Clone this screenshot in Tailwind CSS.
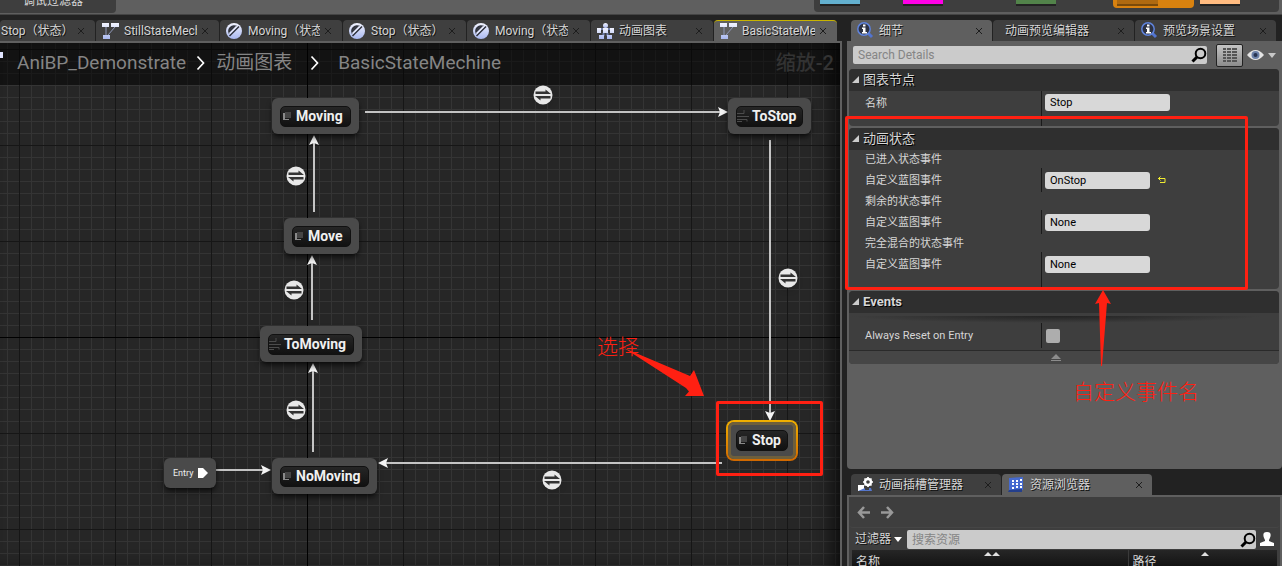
<!DOCTYPE html>
<html lang="zh-CN">
<head>
<meta charset="utf-8">
<title>AniBP_Demonstrate</title>
<script src="https://cdn.jsdelivr.net/npm/@tailwindcss/browser@4"></script>
</head>
<body class="relative flex h-screen flex-col overflow-hidden bg-[#222222] font-['Roboto','Noto_Sans_CJK_SC',sans-serif] text-xs text-[#d6d6d6]">

<svg class="absolute h-0 w-0" aria-hidden="true">
  <defs>
    <linearGradient id="lav" x1="0" y1="0" x2="0" y2="1"><stop offset="0" stop-color="#f2f4ff"/><stop offset="1" stop-color="#a9b8f0"/></linearGradient>
    <symbol id="i-machine" viewBox="0 0 17 16">
      <path d="M4 4v8M13 4 6 12" stroke="#8f98b8" fill="none"/>
      <path d="M0 0h7v4H0zM9 0h8v4H9zM1 12h7v4H1z" fill="url(#lav)"/>
    </symbol>
    <symbol id="i-state" viewBox="0 0 16 16">
      <circle cx="8" cy="8" r="8" fill="url(#lav)"/>
      <path d="M3.200 9.500A5 5 0 0 1 9.500 3.200zM3.500 13 13 3.500" fill="#3a3d4a" stroke="#30333d" stroke-width="1.500"/>
      <path d="M3.500 10.500 10.500 3.500" stroke="#e8ebff" stroke-width="1.500"/>
    </symbol>
    <symbol id="i-anim" viewBox="0 0 17 16">
      <path d="M4 6h9M6.500 10v3M10.500 10v3" stroke="#6f7da8" stroke-width="2"/>
      <circle cx="8.500" cy="2.500" r="2.500" fill="url(#lav)"/>
      <path d="M6 5h5v5H6zM0 5h4v5H0zM13 5h4v5h-4zM2 12h5v4H2zM10 12h5v4h-5z" fill="url(#lav)"/>
    </symbol>
    <symbol id="i-info" viewBox="0 0 17 17">
      <path d="m11 11 4 4" stroke="#5274d0" stroke-width="3"/>
      <circle cx="7" cy="7" r="6.200" fill="#2d3242" stroke="#5f83dc" stroke-width="1.500"/>
      <path d="M6 2.500h2.500v2H6zM5 5.500h3.500v4.500H10v1.500H5V10h1V7H5z" fill="#fff"/>
    </symbol>
    <symbol id="i-slot" viewBox="0 0 17 16">
      <path d="M1 8h6v6H1z" fill="#fff"/><path d="M1 14h14l-1-3h-2v2H8v-2z" fill="#5576cc"/>
      <circle cx="11" cy="5" r="3" fill="none" stroke="#fff" stroke-width="2.400"/>
      <path d="M11 0v2M11 8v2M6 5h2M14 5h2M7.500 1.500 9 3M13 7l1.500 1.500M14.500 1.500 13 3M7.500 8.500 9 7" stroke="#fff" stroke-width="1.700"/>
    </symbol>
    <symbol id="i-assets" viewBox="0 0 16 15">
      <path d="m1 1 14-1v13L1 15z" fill="#456ad0"/><path d="m1 13 13-1v3H0z" fill="#243f8c"/>
      <path d="M4 3h2v2H4zM8 3h2v2H8zM12 2h2v2h-2zM4 6h2v2H4zM8 6h2v2H8zM12 6h2v2h-2zM4 10h2v2H4zM8 9h2v2H8zM12 9h2v2h-2z" fill="#fff"/>
    </symbol>
    <symbol id="i-search" viewBox="0 0 16 16">
      <circle cx="9.500" cy="6.500" r="4.800" fill="none" stroke="#000" stroke-width="2"/><path d="m6 10-4.500 4.500" stroke="#000" stroke-width="3"/>
    </symbol>
    <symbol id="i-x" viewBox="0 0 8 8"><path d="m1 1 6 6M7 1 1 7" stroke="#1d1d1d" fill="none"/></symbol>
    <symbol id="i-swap" viewBox="0 0 20 20">
      <circle cx="10" cy="10" r="9.500" fill="#e8e8e8"/>
      <path d="M2.500 9V6.500h10V4.500L18 9zM17.500 11v2.500h-10v2L2 11z" fill="#333"/>
    </symbol>
    <symbol id="i-pose" viewBox="0 0 10 10"><path d="M1 2h2v6h4v1H1z" fill="#8a8a8a"/><path d="M3 1h6v6H3z" fill="#454545"/></symbol>
    <symbol id="i-conduit" viewBox="0 0 12 12"><path d="M0 3.500h7V0M0 6.500h12M0 9.500h10v2M0 11.500h5" stroke="#4c4c4c" fill="none"/></symbol>
  </defs>
</svg>

<header class="flex h-[15px] shrink-0 items-end justify-between border-b border-[#444] bg-[#5f5f5f]">
  <button class="mb-px flex h-[13px] w-[116px] items-end rounded-br bg-[#3e3e3e] pb-1.5 pl-[23px] text-xs leading-3">调试过滤器</button>
  <div class="mr-[3px] mb-[2px] flex h-3 w-[465px] items-start rounded-b bg-[#3e3e3e] pl-1.5">
    <div class="h-1.5 w-10 border-b-2 border-[#222] bg-[#63b0cf]"></div>
    <div class="ml-[43px] h-1.5 w-10 border-b-2 border-[#222] bg-[#ff00e6]"></div>
    <div class="ml-[73px] h-1.5 w-10 border-b-2 border-[#222] bg-[#52834a]"></div>
    <div class="ml-[57px] h-2 w-[81px] rounded-b-sm bg-[#d9820f] pl-1"><div class="h-1.5 w-[41px] border-b-2 border-[#7a4a0a] bg-[#b06a10]"></div></div>
    <div class="ml-1.5 h-1.5 w-10 border-b-2 border-[#222] bg-[#ffbb80]"></div>
  </div>
</header>

<div class="flex min-h-0 flex-1 pt-[5px]">

  <main class="flex min-w-0 flex-1 flex-col">
    <nav class="flex h-[21px] shrink-0 gap-px overflow-hidden [text-shadow:1px_1px_#111]">
      <div class="flex w-[95px] shrink-0 items-center rounded-t-sm bg-[#3f3f3f] pr-2.5 pl-px"><a href="#" class="flex-1 overflow-hidden whitespace-nowrap">Stop（状态）</a><button aria-label="关闭"><svg class="size-2"><use href="#i-x"/></svg></button></div>
      <div class="flex w-[123px] shrink-0 items-center rounded-t-sm bg-[#3f3f3f] pr-2.5 pl-1.5"><svg class="mr-[5px] h-4 w-[17px] shrink-0"><use href="#i-machine"/></svg><a href="#" class="mr-1 flex-1 overflow-hidden whitespace-nowrap">StillStateMechine</a><button aria-label="关闭"><svg class="size-2"><use href="#i-x"/></svg></button></div>
      <div class="flex w-[122px] shrink-0 items-center rounded-t-sm bg-[#3f3f3f] pr-2.5 pl-1.5"><svg class="mr-1.5 size-4 shrink-0"><use href="#i-state"/></svg><a href="#" class="mr-1 flex-1 overflow-hidden whitespace-nowrap">Moving（状态）</a><button aria-label="关闭"><svg class="size-2"><use href="#i-x"/></svg></button></div>
      <div class="flex w-[123px] shrink-0 items-center rounded-t-sm bg-[#3f3f3f] pr-2.5 pl-1.5"><svg class="mr-1.5 size-4 shrink-0"><use href="#i-state"/></svg><a href="#" class="mr-1 flex-1 overflow-hidden whitespace-nowrap">Stop（状态）</a><button aria-label="关闭"><svg class="size-2"><use href="#i-x"/></svg></button></div>
      <div class="flex w-[123px] shrink-0 items-center rounded-t-sm bg-[#3f3f3f] pr-2.5 pl-1.5"><svg class="mr-1.5 size-4 shrink-0"><use href="#i-state"/></svg><a href="#" class="mr-1 flex-1 overflow-hidden whitespace-nowrap">Moving（状态）</a><button aria-label="关闭"><svg class="size-2"><use href="#i-x"/></svg></button></div>
      <div class="flex w-[122px] shrink-0 items-center rounded-t-sm bg-[#3f3f3f] pr-2.5 pl-1.5"><svg class="mr-[5px] h-4 w-[17px] shrink-0"><use href="#i-anim"/></svg><a href="#" class="mr-1 flex-1 overflow-hidden whitespace-nowrap">动画图表</a><button aria-label="关闭"><svg class="size-2"><use href="#i-x"/></svg></button></div>
      <div class="flex w-[123px] shrink-0 items-center rounded-t-sm border-t border-[#c8b400] bg-[#5f5f5f] pr-2.5 pl-1.5"><svg class="mr-[5px] h-4 w-[17px] shrink-0"><use href="#i-machine"/></svg><a href="#" class="mr-1 flex-1 overflow-hidden whitespace-nowrap">BasicStateMechine</a><button aria-label="关闭"><svg class="size-2"><use href="#i-x"/></svg></button></div>
    </nav>

    <section class="relative min-h-0 flex-1 overflow-hidden border-t-2 border-r-2 border-[#5f5f5f] bg-[#262626]">
      <!-- canvas grid: 12px cells, a darker rule every 96px, axes in black -->
      <svg class="absolute inset-0 h-full w-full" shape-rendering="crispEdges">
        <defs>
          <pattern id="minor" x="7" y="6" width="12" height="12" patternUnits="userSpaceOnUse"><path d="M0 0h12v1H1v11H0z" fill="#343434"/></pattern>
          <pattern id="major" x="19" y="6" width="96" height="96" patternUnits="userSpaceOnUse"><path d="M0 0h96v1H1v95H0z" fill="#161616"/></pattern>
        </defs>
        <rect width="100%" height="100%" fill="url(#minor)"/>
        <rect width="100%" height="100%" fill="url(#major)"/>
        <path d="M307 0h1v2000h-1zM0 294h3000v1H0z" fill="#000"/>
      </svg>
      <div class="absolute inset-0 shadow-[inset_-14px_0_24px_-12px_#000]"></div>

      <!-- transitions -->
      <svg class="absolute inset-0 h-full w-full">
        <g stroke="#c4c4c4" stroke-width="2" fill="none">
          <path d="M365 69H720M770 97V370M314 169V100M312 277V220M313 409V328M216 427H264M722 420H386"/>
        </g>
        <g fill="#f4f4f4">
          <path d="m728 69-10-5 2 5-2 5zM770 378l-5-10 5 2 5-2zM314 92l-5 10 5-2 5 2zM312 212l-5 10 5-2 5 2zM313 320l-5 10 5-2 5 2zM271 427l-10-5 2 5-2 5zM378 420l10-5-2 5 2 5z"/>
        </g>
      </svg>
      <svg class="absolute top-[42px] left-[533px] size-5 drop-shadow-md"><use href="#i-swap"/></svg>
      <svg class="absolute top-[123px] left-[286px] size-5 drop-shadow-md"><use href="#i-swap"/></svg>
      <svg class="absolute top-[237px] left-[284px] size-5 drop-shadow-md"><use href="#i-swap"/></svg>
      <svg class="absolute top-[357px] left-[286px] size-5 drop-shadow-md"><use href="#i-swap"/></svg>
      <svg class="absolute top-[225px] left-[778px] size-5 drop-shadow-md"><use href="#i-swap"/></svg>
      <svg class="absolute top-[427px] left-[542px] size-5 drop-shadow-md"><use href="#i-swap"/></svg>

      <!-- state nodes -->
      <div class="absolute top-[55px] left-[272px] h-9 w-[87px] rounded-md bg-[#4a4a4a] p-2 shadow-md shadow-black/60"><div class="flex h-[21px] items-center gap-1 rounded-[5px] border border-[#111] bg-linear-to-b from-[#262626] to-[#111] pb-0.5 pl-px text-sm leading-4 font-bold text-[#f0f0f0]"><svg class="size-2.5 shrink-0"><use href="#i-pose"/></svg>Moving</div></div>
      <div class="absolute top-[55px] left-[728px] h-9 w-[83px] rounded-md bg-[#4a4a4a] p-2 shadow-md shadow-black/60"><div class="flex h-[21px] items-center gap-[3px] rounded-[5px] border border-[#111] bg-linear-to-b from-[#262626] to-[#111] pb-0.5 text-sm leading-4 font-bold text-[#f0f0f0]"><svg class="size-3 shrink-0"><use href="#i-conduit"/></svg>ToStop</div></div>
      <div class="absolute top-[175px] left-[284px] h-9 w-[75px] rounded-md bg-[#4a4a4a] p-2 shadow-md shadow-black/60"><div class="flex h-[21px] items-center gap-1 rounded-[5px] border border-[#111] bg-linear-to-b from-[#262626] to-[#111] pb-0.5 pl-px text-sm leading-4 font-bold text-[#f0f0f0]"><svg class="size-2.5 shrink-0"><use href="#i-pose"/></svg>Move</div></div>
      <div class="absolute top-[283px] left-[260px] h-9 w-[102px] rounded-md bg-[#4a4a4a] p-2 shadow-md shadow-black/60"><div class="flex h-[21px] items-center gap-[3px] rounded-[5px] border border-[#111] bg-linear-to-b from-[#262626] to-[#111] pb-0.5 text-sm leading-4 font-bold text-[#f0f0f0]"><svg class="size-3 shrink-0"><use href="#i-conduit"/></svg>ToMoving</div></div>
      <div class="absolute top-[415px] left-[272px] h-9 w-[105px] rounded-md bg-[#4a4a4a] p-2 shadow-md shadow-black/60"><div class="flex h-[21px] items-center gap-1 rounded-[5px] border border-[#111] bg-linear-to-b from-[#262626] to-[#111] pb-0.5 pl-px text-sm leading-4 font-bold text-[#f0f0f0]"><svg class="size-2.5 shrink-0"><use href="#i-pose"/></svg>NoMoving</div></div>
      <div class="absolute top-[377px] left-[726px] h-[41px] w-[72px] rounded-lg bg-linear-to-b from-[#f0b000] to-[#d06800] p-0.5"><div class="h-full rounded-md bg-[#4a4a4a] p-2 shadow-[inset_0_0_0_3px_#6e5f3c]"><div class="flex h-[21px] items-center gap-1 rounded-[5px] border border-[#111] bg-linear-to-b from-[#262626] to-[#111] pb-0.5 pl-px text-sm leading-4 font-bold text-[#f0f0f0]"><svg class="size-2.5 shrink-0"><use href="#i-pose"/></svg>Stop</div></div></div>
      <div class="absolute top-[415px] left-[164px] flex h-[30px] w-[52px] items-center justify-between rounded-md bg-[#4a4a4a] pr-2 pl-[9px] text-[9px] text-[#eee] shadow-md shadow-black/60">Entry<svg class="h-2.5 w-2.5" viewBox="0 0 10 10"><path d="M0 0h5l5 5-5 5H0z" fill="#fff"/></svg></div>

      <!-- breadcrumb bar -->
      <div class="absolute inset-x-0 top-0 flex h-[42px] items-center bg-black/50 pb-0.5 pl-[17px] text-[19px] text-[#858585]">
        <span class="absolute top-[9px] left-0 h-1.5 w-[3px] bg-[#e0e4ff]"></span>
        <a href="#">AniBP_Demonstrate</a>
        <svg class="mx-2.5 h-4 w-2.5" viewBox="0 0 10 16"><path d="m1.500 1.500 6 6.500-6 6.500" stroke="#fff" stroke-width="1.700" fill="none"/></svg>
        <a href="#">动画图表</a>
        <svg class="mx-[18px] h-4 w-2.5" viewBox="0 0 10 16"><path d="m1.500 1.500 6 6.500-6 6.500" stroke="#fff" stroke-width="1.700" fill="none"/></svg>
        <a href="#">BasicStateMechine</a>
        <span class="mr-1.5 ml-auto text-xl font-medium text-[#333]">缩放-2</span>
      </div>

      <!-- callout on the Stop node -->
      <div class="absolute top-[358px] left-[716px] h-[75px] w-[107px] rounded-xs border-3 border-[#ff2012]"></div>
      <div class="absolute top-[290px] left-[597px] text-[21px] leading-7 font-light text-[#ff2012]">选择</div>
      <svg class="absolute top-[304px] left-[622px] h-[52px] w-[84px]" viewBox="0 0 84 52"><path d="M2 1 68 29 72 23 82 49 63 49 67 44.500 64 41z" fill="#ff2012"/></svg>
    </section>
  </main>

  <aside class="relative ml-[5px] flex w-[435px] shrink-0 flex-col">
    <nav class="flex h-[21px] shrink-0 gap-px pl-1 [text-shadow:1px_1px_#111]">
      <div class="flex w-[141px] items-center rounded-t-sm bg-[#5f5f5f] pr-[9px] pl-1.5"><svg class="mr-[5px] size-[17px]"><use href="#i-info"/></svg><a href="#" class="flex-1">细节</a><button aria-label="关闭"><svg class="size-2"><use href="#i-x"/></svg></button></div>
      <div class="flex w-[141px] items-center rounded-t-sm bg-[#3f3f3f] pr-[9px] pl-3"><a href="#" class="flex-1">动画预览编辑器</a><button aria-label="关闭"><svg class="size-2"><use href="#i-x"/></svg></button></div>
      <div class="flex w-[141px] items-center rounded-t-sm bg-[#3f3f3f] pr-[9px] pl-1.5"><svg class="mr-[5px] size-[17px]"><use href="#i-info"/></svg><a href="#" class="flex-1">预览场景设置</a><button aria-label="关闭"><svg class="size-2"><use href="#i-x"/></svg></button></div>
    </nav>

    <section class="min-h-0 flex-1 rounded-b bg-[#5f5f5f] pr-[3px] pl-0.5">
      <div class="flex h-7 items-center pl-1">
        <label class="flex h-[18px] flex-1 items-center rounded-xs bg-[#cbcbcb] pl-[5px]"><input type="search" aria-label="Search Details" placeholder="Search Details" class="min-w-0 flex-1 bg-transparent outline-none placeholder:text-[#858585]"><svg class="size-4"><use href="#i-search"/></svg></label>
        <button aria-label="属性矩阵" class="ml-[9px] flex h-[23px] w-[27px] items-center justify-center rounded-xs border border-[#222] bg-linear-to-b from-[#c4c4c4] to-[#8c8c8c]"><svg class="h-[15px] w-3.5" viewBox="0 0 14 15"><path d="M0 1h3M4 1h4M9 1h5M0 4h3M4 4h4M9 4h5M0 7h3M4 7h4M9 7h5M0 10h3M4 10h4M9 10h5M0 13h3M4 13h4M9 13h5" stroke="#555" stroke-width="2"/></svg></button>
        <button aria-label="视图选项" class="mr-[3px] ml-1 flex items-center gap-1"><svg class="h-3 w-[17px]" viewBox="0 0 17 12"><path d="M0 6Q8.500-4 17 6 8.500 16 0 6z" fill="#e4e4e4"/><circle cx="8.500" cy="6" r="4" fill="#6b80a8"/><circle cx="8.500" cy="6" r="2" fill="#263250"/></svg><svg class="h-[5px] w-2" viewBox="0 0 8 5"><path d="M0 0h8L4 5z" fill="#c8c8c8"/></svg></button>
      </div>

      <div class="flex flex-col gap-0.5">
        <div class="overflow-hidden rounded bg-[#3e3e3e]">
          <h2 class="flex h-[22px] items-center gap-1 bg-[#2f2f2f] pl-[3px] text-[13px] [text-shadow:1px_1px_#000]"><svg class="mb-0.5 size-[7px]" viewBox="0 0 7 7"><path d="M7 0v7H0z" fill="#ccc"/></svg>图表节点</h2>
          <div class="grid grid-cols-[192px_1fr] text-[11px]">
            <label for="name" class="flex h-6 items-center pt-0.5 pl-4">名称</label>
            <div class="flex h-[35px] items-start border-l border-[#1a1a1a] pt-[3px] pl-[3px]"><input id="name" value="Stop" class="h-[17px] w-[125px] rounded-[3px] bg-[#d8d8d8] px-[5px] text-black"></div>
          </div>
        </div>

        <div class="overflow-hidden rounded bg-[#3e3e3e]">
          <h2 class="flex h-[22px] items-center gap-1 bg-[#2f2f2f] pl-[3px] text-[13px] [text-shadow:1px_1px_#000]"><svg class="mb-0.5 size-[7px]" viewBox="0 0 7 7"><path d="M7 0v7H0z" fill="#ccc"/></svg>动画状态</h2>
          <div class="grid grid-cols-[192px_1fr] text-[11px]">
            <h3 class="col-span-2 flex h-[18px] items-center pt-0.5 pl-4">已进入状态事件</h3>
            <label for="enter" class="flex h-6 items-center pt-0.5 pl-4">自定义蓝图事件</label>
            <div class="flex items-center border-l border-[#1a1a1a] pl-[3px]"><input id="enter" value="OnStop" class="h-[17px] w-[105px] rounded-[3px] bg-[#d8d8d8] px-[5px] text-black"><button aria-label="重置" class="ml-[7px]"><svg class="h-2 w-2.5" viewBox="0 0 10 8"><path d="M1 2.500h7v4H3M3.500.5l-2 2 2 2" stroke="#f0ec30" fill="none"/></svg></button></div>
            <h3 class="col-span-2 flex h-[18px] items-center pt-0.5 pl-4">剩余的状态事件</h3>
            <label for="left" class="flex h-6 items-center pt-0.5 pl-4">自定义蓝图事件</label>
            <div class="flex items-center border-l border-[#1a1a1a] pl-[3px]"><input id="left" value="None" class="h-[17px] w-[105px] rounded-[3px] bg-[#d8d8d8] px-[5px] text-black"></div>
            <h3 class="col-span-2 flex h-[18px] items-center pt-0.5 pl-4">完全混合的状态事件</h3>
            <label for="blended" class="flex h-6 items-center pt-0.5 pl-4">自定义蓝图事件</label>
            <div class="flex h-[37px] items-start border-l border-[#1a1a1a] pt-1 pl-[3px]"><input id="blended" value="None" class="h-[17px] w-[105px] rounded-[3px] bg-[#d8d8d8] px-[5px] text-black"></div>
          </div>
        </div>

        <div class="overflow-hidden rounded bg-[#3e3e3e]">
          <h2 class="flex h-[22px] items-center gap-1 bg-[#2f2f2f] pl-[3px] text-[13px] font-bold [text-shadow:1px_1px_#000]"><svg class="mb-0.5 size-[7px]" viewBox="0 0 7 7"><path d="M7 0v7H0z" fill="#ccc"/></svg>Events</h2>
          <div class="mt-[3px] mr-4 h-[7px] bg-[radial-gradient(ellipse_at_top,#222,#3e3e3e_70%)]"></div>
          <div class="grid h-[27px] grid-cols-[192px_1fr] pb-0.5 text-[11px]">
            <label for="reset" class="flex items-center pt-0.5 pl-4">Always Reset on Entry</label>
            <div class="flex items-center border-l border-[#1a1a1a] pt-px pl-1"><input id="reset" type="checkbox" class="size-3.5 appearance-none rounded-xs bg-[#adadad] checked:bg-[#e08a10]"></div>
          </div>
          <button aria-label="收起" class="flex h-[14px] w-full items-center justify-center border-t border-[#2a2a2a] bg-[#464646] pr-4"><svg class="h-2 w-2.5" viewBox="0 0 10 8"><path d="M5 0l5 5H0zM0 6h10v1H0z" fill="#8c8c8c"/></svg></button>
        </div>
      </div>
    </section>

    <section class="mt-[5px] flex h-[92px] shrink-0 flex-col">
      <nav class="flex h-[21px] shrink-0 gap-px pl-1 [text-shadow:1px_1px_#111]">
        <div class="flex w-[150px] items-center rounded-t-sm bg-[#3f3f3f] pr-[9px] pl-1.5"><svg class="mr-[5px] h-4 w-[17px]"><use href="#i-slot"/></svg><a href="#" class="flex-1">动画插槽管理器</a><button aria-label="关闭"><svg class="size-2"><use href="#i-x"/></svg></button></div>
        <div class="flex w-[150px] items-center rounded-t-sm bg-[#5f5f5f] pr-[9px] pl-1.5"><svg class="mr-1.5 h-[15px] w-4"><use href="#i-assets"/></svg><a href="#" class="flex-1">资源浏览器</a><button aria-label="关闭"><svg class="size-2"><use href="#i-x"/></svg></button></div>
      </nav>
      <div class="flex min-h-0 flex-1 flex-col border-x-2 border-t-2 border-[#5f5f5f] bg-[#3e3e3e]">
        <div class="flex h-[31px] shrink-0 items-center gap-[11px] rounded border-b border-[#454545] pl-2">
          <button aria-label="后退"><svg class="h-[13px] w-[13px]" viewBox="0 0 13 13"><path d="M7 1 2 6.500 7 12M2 6.500h11" stroke="#999" stroke-width="2.500" fill="none"/></svg></button>
          <button aria-label="前进"><svg class="h-[13px] w-[13px]" viewBox="0 0 13 13"><path d="m6 1 5 5.500L6 12M11 6.500H0" stroke="#999" stroke-width="2.500" fill="none"/></svg></button>
        </div>
        <div class="flex h-[22px] shrink-0 items-center pr-1.5 pl-1.5">
          <button class="flex items-center gap-[3px] [text-shadow:1px_1px_#111]">过滤器<svg class="h-[5px] w-2" viewBox="0 0 8 5"><path d="M0 0h8L4 5z" fill="#fff"/></svg></button>
          <label class="ml-[5px] flex h-[19px] flex-1 items-center rounded-xs bg-[#cbcbcb] pt-px pl-[5px]"><input type="search" aria-label="搜索资源" placeholder="搜索资源" class="min-w-0 flex-1 bg-transparent outline-none placeholder:text-[#858585]"><svg class="size-4"><use href="#i-search"/></svg></label>
          <button aria-label="用户" class="ml-1"><svg class="h-3.5 w-3.5" viewBox="0 0 14 14"><path d="M7 0c6 0 3 6 2 8v1l5 2v3H0v-3l5-2V8C4 6 1 0 7 0z" fill="#fff"/></svg></button>
        </div>
        <table class="mr-[3px] ml-[3px] table-fixed border-collapse text-left">
          <thead><tr class="h-[18px] bg-linear-to-b from-[#262626] to-[#121212]">
            <th class="relative w-[276px] border-r border-[#3a3a3a] pl-1 align-bottom leading-3 font-normal">名称<svg class="absolute top-0.5 left-[132px] h-1 w-4" viewBox="0 0 16 4"><path d="M4 0l4 4H0zM12 0l4 4H8z" fill="#e0e0e0"/></svg></th>
            <th class="relative pl-1 align-bottom leading-3 font-normal">路径<svg class="absolute top-0.5 left-[72px] h-1 w-2" viewBox="0 0 8 4"><path d="M4 0l4 4H0z" fill="#e0e0e0"/></svg></th>
          </tr></thead>
        </table>
      </div>
    </section>

    <!-- callout on the state events -->
    <div class="absolute top-[96px] -left-0.5 h-[174px] w-[403px] rounded-xs border-3 border-[#ff2012]"></div>
    <svg class="absolute top-[270px] left-[247px] h-[76px] w-[18px]" viewBox="0 0 18 76"><path d="M9 0l8 14-4-1-5 63h-1L5 13l-4 1z" fill="#ff2012"/></svg>
    <div class="absolute top-[358px] left-[226px] text-[21px] leading-7 font-light text-[#ff2012]">自定义事件名</div>
  </aside>
</div>
</body>
</html>
